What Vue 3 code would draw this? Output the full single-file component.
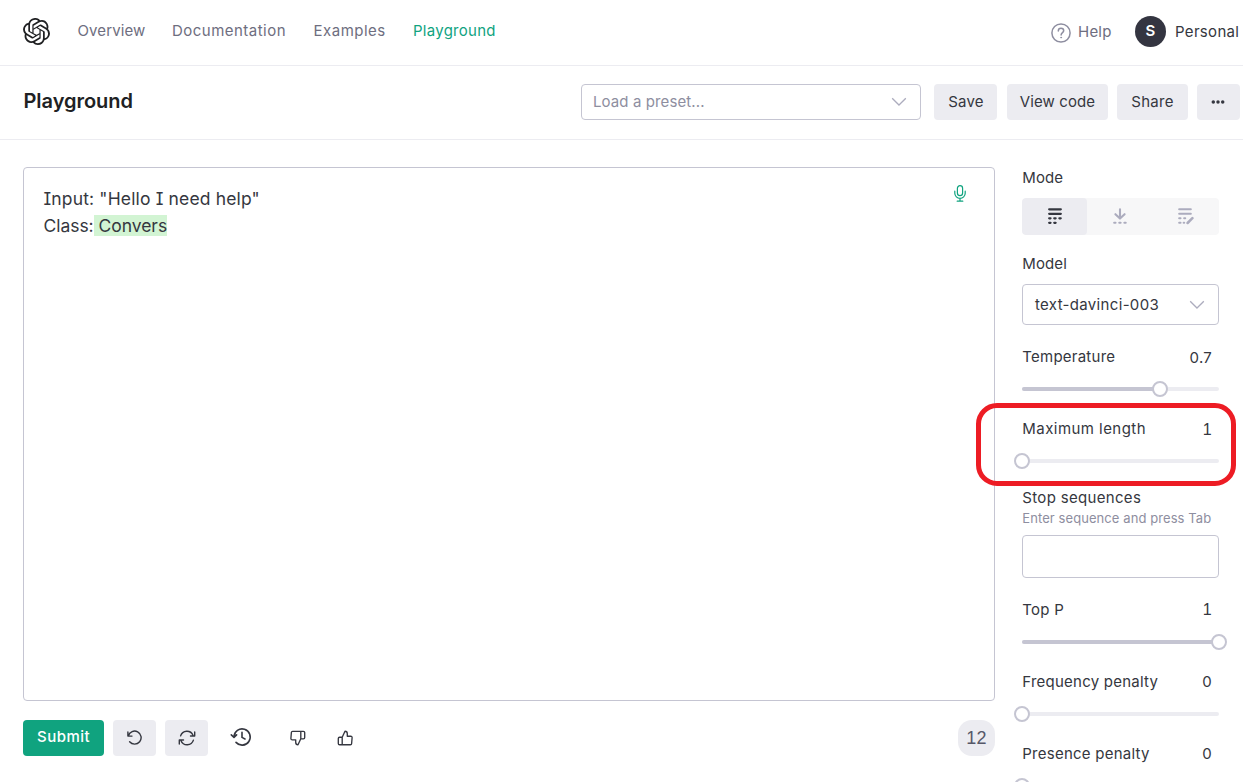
<script setup>
const nav = [
  { label: 'Overview', cls: 'n1' },
  { label: 'Documentation', cls: 'n2' },
  { label: 'Examples', cls: 'n3' },
  { label: 'Playground', cls: 'n4 active' }
]
const upper = [
  { label: 'Temperature', value: '0.7', pct: 70, marked: false },
  { label: 'Maximum length', value: '1', pct: 0, marked: true }
]
const lower = [
  { label: 'Top P', value: '1', pct: 100 },
  { label: 'Frequency penalty', value: '0', pct: 0 },
  { label: 'Presence penalty', value: '0', pct: 0 }
]
</script>

<template>
  <div class="page">
    <header class="top">
      <svg class="logo" viewBox="0 0 24 24" width="27" height="27"><path fill="#202123" d="M22.2819 9.8211a5.9847 5.9847 0 0 0-.5157-4.9108 6.0462 6.0462 0 0 0-6.5098-2.9A6.0651 6.0651 0 0 0 4.9807 4.1818a5.9847 5.9847 0 0 0-3.9977 2.9 6.0462 6.0462 0 0 0 .7427 7.0966 5.98 5.98 0 0 0 .511 4.9107 6.051 6.051 0 0 0 6.5146 2.9001A5.9847 5.9847 0 0 0 13.2599 24a6.0557 6.0557 0 0 0 5.7718-4.2058 5.9894 5.9894 0 0 0 3.9977-2.9001 6.0557 6.0557 0 0 0-.7475-7.0729zm-9.022 12.6081a4.4755 4.4755 0 0 1-2.8764-1.0408l.1419-.0804 4.7783-2.7582a.7948.7948 0 0 0 .3927-.6813v-6.7369l2.02 1.1686a.071.071 0 0 1 .038.052v5.5826a4.504 4.504 0 0 1-4.4945 4.4944zm-9.6607-4.1254a4.4708 4.4708 0 0 1-.5346-3.0137l.142.0852 4.783 2.7582a.7712.7712 0 0 0 .7806 0l5.8428-3.3685v2.3324a.0804.0804 0 0 1-.0332.0615L9.74 19.9502a4.4992 4.4992 0 0 1-6.1408-1.6464zM2.3408 7.8956a4.485 4.485 0 0 1 2.3655-1.9728V11.6a.7664.7664 0 0 0 .3879.6765l5.8144 3.3543-2.0201 1.1685a.0757.0757 0 0 1-.071 0l-4.8303-2.7865A4.504 4.504 0 0 1 2.3408 7.872zm16.5963 3.8558L13.1038 8.364 15.1192 7.2a.0757.0757 0 0 1 .071 0l4.8303 2.7913a4.4944 4.4944 0 0 1-.6765 8.1042v-5.6772a.79.79 0 0 0-.407-.667zm2.0107-3.0231l-.142-.0852-4.7735-2.7818a.7759.7759 0 0 0-.7854 0L9.409 9.2297V6.8974a.0662.0662 0 0 1 .0284-.0615l4.8303-2.7866a4.4992 4.4992 0 0 1 6.6802 4.66zM8.3065 12.863l-2.02-1.1638a.0804.0804 0 0 1-.038-.0567V6.0742a4.4992 4.4992 0 0 1 7.3757-3.4537l-.142.0805L8.704 5.459a.7948.7948 0 0 0-.3927.6813zm1.0976-2.3654l2.602-1.4998 2.6069 1.4998v2.9994l-2.5974 1.4997-2.6067-1.4997Z"/></svg>
      <nav>
        <a v-for="n in nav" :key="n.label" :class="n.cls">{{ n.label }}</a>
      </nav>
      <div class="account">
        <svg class="help-icon" width="20" height="20" viewBox="0 0 20 20" fill="none" stroke="#8e8ea0" stroke-width="1.5" stroke-linecap="round"><circle cx="10" cy="10" r="9.1"/><path d="M7.3 7.9C7.3 6.2 8.5 5.3 10 5.3s2.7 1 2.7 2.4c0 1.9-2.6 2-2.6 4.2"/><circle cx="10.1" cy="14.6" r=".5" fill="#8e8ea0" stroke-width=".8"/></svg>
        <span class="help">Help</span>
        <span class="avatar">S</span>
        <span class="personal">Personal</span>
      </div>
    </header>

    <div class="bar">
      <h1>Playground</h1>
      <div class="preset">
        <span>Load a preset...</span>
        <svg width="16" height="10" viewBox="0 0 16 10" fill="none" stroke="#acacbe" stroke-width="1.3"><path d="M1.2 1.2 8 8l6.8-6.8"/></svg>
      </div>
      <button class="save">Save</button>
      <button class="view">View code</button>
      <button class="share">Share</button>
      <button class="more"><svg width="14" height="4" viewBox="0 0 14 4" fill="#353740"><circle cx="2.3" cy="2" r="1.75"/><circle cx="7" cy="2" r="1.75"/><circle cx="11.7" cy="2" r="1.75"/></svg></button>
    </div>

    <main>
      <section class="work">
        <div class="editor">
          <div class="text">
            <div class="l1">Input: "Hello I need help"</div>
            <div class="l2">Class:<mark>&nbsp;Convers</mark></div>
          </div>
          <svg class="mic" width="12" height="17" viewBox="0 0 12 17" fill="none" stroke="#10a37f" stroke-width="1.2" stroke-linecap="round"><rect x="3.4" y=".7" width="5.2" height="10" rx="2.6"/><path d="M.8 6.2v2a5.2 5.2 0 0 0 10.4 0v-2M6 13.4v2.7M3.2 16.2h5.6"/></svg>
        </div>
        <div class="actions">
          <button class="submit">Submit</button>
          <button class="sq"><svg width="16" height="16" viewBox="0 0 16 16" fill="none" stroke="#353740" stroke-width="1.4" stroke-linecap="round" stroke-linejoin="round"><path d="M.9 2v4.1H5M1.4 5.7A6.5 6.5 0 1 1 2.6 11.7"/></svg></button>
          <button class="sq"><svg width="18" height="16" viewBox="0 0 18 16" fill="none" stroke="#353740" stroke-width="1.4" stroke-linecap="round" stroke-linejoin="round"><path d="M2.6 5.9A6.6 6.6 0 0 1 15 5.3M16.7 2v4H12.5M15.4 10.1A6.6 6.6 0 0 1 3 10.7M1.3 14v-4h4.2"/></svg></button>
          <svg class="history" width="22" height="20" viewBox="0 0 22 20" fill="none" stroke="#353740" stroke-width="1.6" stroke-linecap="round" stroke-linejoin="round"><path d="M4 9.8A8.1 8.1 0 1 1 6 15.4M1.3 7.9 4 10.5l2.6-2.6M12 5.4v5l3 1.6"/></svg>
          <svg class="down" width="16" height="16" viewBox="0 0 16 16" fill="none" stroke="#353740" stroke-width="1.35" stroke-linejoin="round"><path d="M10.8 1.3H2.6Q1.5 1.3 1.4 2.3L.9 8.2Q.8 9.8 2.3 9.8H5.7V12.3Q5.7 14.8 8 14.8L10.8 8.8V1.3H13.4Q14.7 1.3 14.7 2.5V7.6Q14.7 8.8 13.4 8.8H10.8"/></svg>
          <svg class="up" width="16" height="16" viewBox="0 0 16 16" fill="none" stroke="#353740" stroke-width="1.35" stroke-linejoin="round"><path d="M5.2 14.7H13.4Q14.5 14.7 14.6 13.7L15.1 7.8Q15.2 6.2 13.7 6.2H10.3V3.7Q10.3 1.2 8 1.2L5.2 7.2V14.7H2.6Q1.3 14.7 1.3 13.5V8.4Q1.3 7.2 2.6 7.2H5.2"/></svg>
          <span class="count">12</span>
        </div>
      </section>

      <aside>
        <div class="label">Mode</div>
        <div class="modes">
          <span class="on"><svg width="16" height="18" viewBox="0 0 16 18" stroke="#353740" stroke-width="2.3" stroke-linecap="round"><path d="M2.2 2.3h11.6M2.2 6.8h11.6M2.2 11.3h1.3M7.3 11.3h1.3M12.4 11.3h1.3M2.2 15.8h1.3M7.3 15.8h1.3"/></svg></span>
          <span><svg width="16" height="18" viewBox="0 0 16 18" fill="none" stroke="#acacbe" stroke-width="2.1" stroke-linecap="round" stroke-linejoin="round"><path d="M8 2.2v9M3.4 7.2 8 11.6l4.6-4.4M2.2 15.8h1.3M7.3 15.8h1.3M12.4 15.8h1.3"/></svg></span>
          <span><svg width="17" height="18" viewBox="0 0 17 18" stroke="#acacbe" stroke-width="2.1" stroke-linecap="round"><path d="M2.2 2.3h11.6M2.2 6.8h11.6M2.2 11.3h1.3M7.2 11.3h1M2.2 15.8h1.3M6.7 15.8h.5"/><path d="m10.6 16 4.8-4.8" stroke-width="2.5"/></svg></span>
        </div>
        <div class="label model-label">Model</div>
        <div class="model">
          <span>text-davinci-003</span>
          <svg width="16" height="10" viewBox="0 0 16 10" fill="none" stroke="#acacbe" stroke-width="1.3"><path d="M1.2 1.2 8 8l6.8-6.8"/></svg>
        </div>
        <div v-for="s in upper" :key="s.label" class="param upper">
          <div class="row"><span :class="{ maxi: s.marked }">{{ s.label }}</span><span :class="['val', { one: s.value === '1' }]">{{ s.value }}</span></div>
          <div class="slider"><i :style="{ width: s.pct + '%' }"></i><b :style="{ left: s.pct + '%' }"></b></div>
          <div v-if="s.marked" class="ring"></div>
        </div>
        <div class="label stop">Stop sequences</div>
        <div class="hint">Enter sequence and press Tab</div>
        <div class="input"></div>
        <div v-for="s in lower" :key="s.label" class="param">
          <div class="row"><span>{{ s.label }}</span><span :class="['val', { one: s.value === '1' }]">{{ s.value }}</span></div>
          <div class="slider"><i :style="{ width: s.pct + '%' }"></i><b :style="{ left: s.pct + '%' }"></b></div>
        </div>
      </aside>
    </main>
  </div>
</template>

<style>
body { margin: 0; overflow: hidden; background: #fff; }
</style>

<style scoped>
* { box-sizing: border-box; }
.page { width: 1243px; height: 782px; overflow: hidden; background: #fff; font: 15px/24px Inter, "Liberation Sans", sans-serif; letter-spacing: .24px; color: #353740; white-space: nowrap; }
.page svg { display: block; flex: none; }
.top { height: 66px; border-bottom: 1px solid #ececf1; display: flex; align-items: center; padding: 0 3px 0 23px; }
.logo { margin-top: -3px; }
nav { display: flex; margin: -3px 0 0 27.5px; color: #6e6e80; }
nav a { width: 94.5px; }
nav .n1 { letter-spacing: .1px; }
nav .n2 { width: 141.5px; letter-spacing: .48px; }
nav .n3 { width: 99.5px; letter-spacing: .5px; }
nav .active { color: #10a37f; letter-spacing: .27px; }
.account { display: flex; align-items: center; margin-left: auto; margin-top: -3px; }
.help-icon { margin-top: 3px; }
.help { color: #6e6e80; width: 57px; padding-left: 7px; }
.help, .personal { margin-top: 1px; }
.avatar { width: 31px; height: 31px; border-radius: 50%; background: #343541; color: #fff; text-align: center; line-height: 30px; font-weight: 600; }
.account .avatar { margin-left: 7px; }
.personal { width: 65px; margin-left: 9px; letter-spacing: .32px; }
.bar { height: 74px; border-bottom: 1px solid #ececf1; display: flex; align-items: center; padding: 0 3px 2px 23px; }
h1 { margin: -2px auto 0 0; padding-left: .5px; font-size: 20px; line-height: 28px; font-weight: 600; letter-spacing: -.05px; color: #202123; }
.preset { width: 340px; height: 36px; border: 1px solid #c5c5d2; border-radius: 4px; display: flex; align-items: center; justify-content: space-between; padding: 0 13px 0 11px; color: #8e8ea0; margin-right: 13px; letter-spacing: .1px; }
button { border: 0; padding: 0; height: 36px; border-radius: 4px; background: #ececf1; color: #353740; font: inherit; letter-spacing: inherit; display: flex; align-items: center; justify-content: center; }
.save { width: 63px; margin-right: 10px; padding-left: 1px; }
.view { width: 101px; margin-right: 9px; letter-spacing: .1px; }
.share { width: 71px; margin-right: 9px; }
.more { width: 43px; padding-right: 2px; }
main { display: flex; padding: 27px 24px 0 23px; }
.work { width: 972px; }
.editor { height: 534px; border: 1px solid #c5c5d2; border-radius: 4px; display: flex; justify-content: space-between; padding: 17px 28px 0 19.5px; }
.text { font-size: 17.5px; line-height: 27px; letter-spacing: -.04px; font-feature-settings: "cv08"; }
.l1 { letter-spacing: .15px; }
mark { background: #d2f4d3; color: inherit; }
.actions { display: flex; align-items: center; height: 36px; margin-top: 19px; }
.submit { width: 81px; background: #10a37f; color: #fff; font-weight: 500; padding-bottom: 2px; letter-spacing: .45px; }
.sq { width: 43px; margin-left: 9px; }
.history { margin: -2px 0 0 22px; }
.down { margin-left: 38px; }
.up { margin-left: 31px; }
.count { margin-left: auto; width: 37px; height: 36px; line-height: 36px; text-align: center; border-radius: 14px; background: #ececf1; color: #565869; font-family: "Liberation Sans", sans-serif; font-size: 18px; }
aside { width: 197px; margin-left: 27px; height: 615px; margin-top: -1px; }
.modes { display: flex; height: 37px; margin-top: 8px; background: #f7f7f8; border-radius: 4px; overflow: hidden; }
.modes span { flex: 1; display: flex; align-items: center; justify-content: center; padding: 0 1px 1px 0; }
.modes .on { background: #ececf1; border-radius: 4px; padding-right: 0; }
.label, .row { height: 24px; padding-left: .3px; }
.label { letter-spacing: .1px; }
.model-label { margin-top: 17px; }
.model { height: 41px; margin-top: 8px; border: 1px solid #c5c5d2; border-radius: 4px; display: flex; align-items: center; justify-content: space-between; padding: 0 13px 0 12px; letter-spacing: .33px; }
.param { position: relative; height: 52px; margin-top: 20px; }
.row { display: flex; justify-content: space-between; padding-right: 7px; }
.row .maxi { letter-spacing: .45px; }
.upper .val { padding-top: 1px; }
.one { font-family: "Liberation Sans", sans-serif; font-size: 16px; }
.slider { position: relative; margin-top: 18px; height: 4px; border-radius: 2px; background: #ececf1; }
.slider i { display: block; height: 4px; border-radius: 2px; background: #c5c5d2; }
.slider b { position: absolute; top: -6px; width: 16px; height: 16px; margin-left: -8px; border: 2px solid #c5c5d2; border-radius: 50%; background: #fff; }
.ring { position: absolute; left: -46px; top: -14px; width: 260px; height: 83px; border: 5px solid #ed1c24; border-radius: 21px; }
.stop { margin-top: 17px; letter-spacing: .32px; }
.hint { height: 17px; line-height: 17px; font-size: 13px; color: #8e8ea0; padding-left: .3px; letter-spacing: .08px; }
.input { height: 43px; margin-top: 8px; border: 1px solid #c5c5d2; border-radius: 4px; }
</style>
